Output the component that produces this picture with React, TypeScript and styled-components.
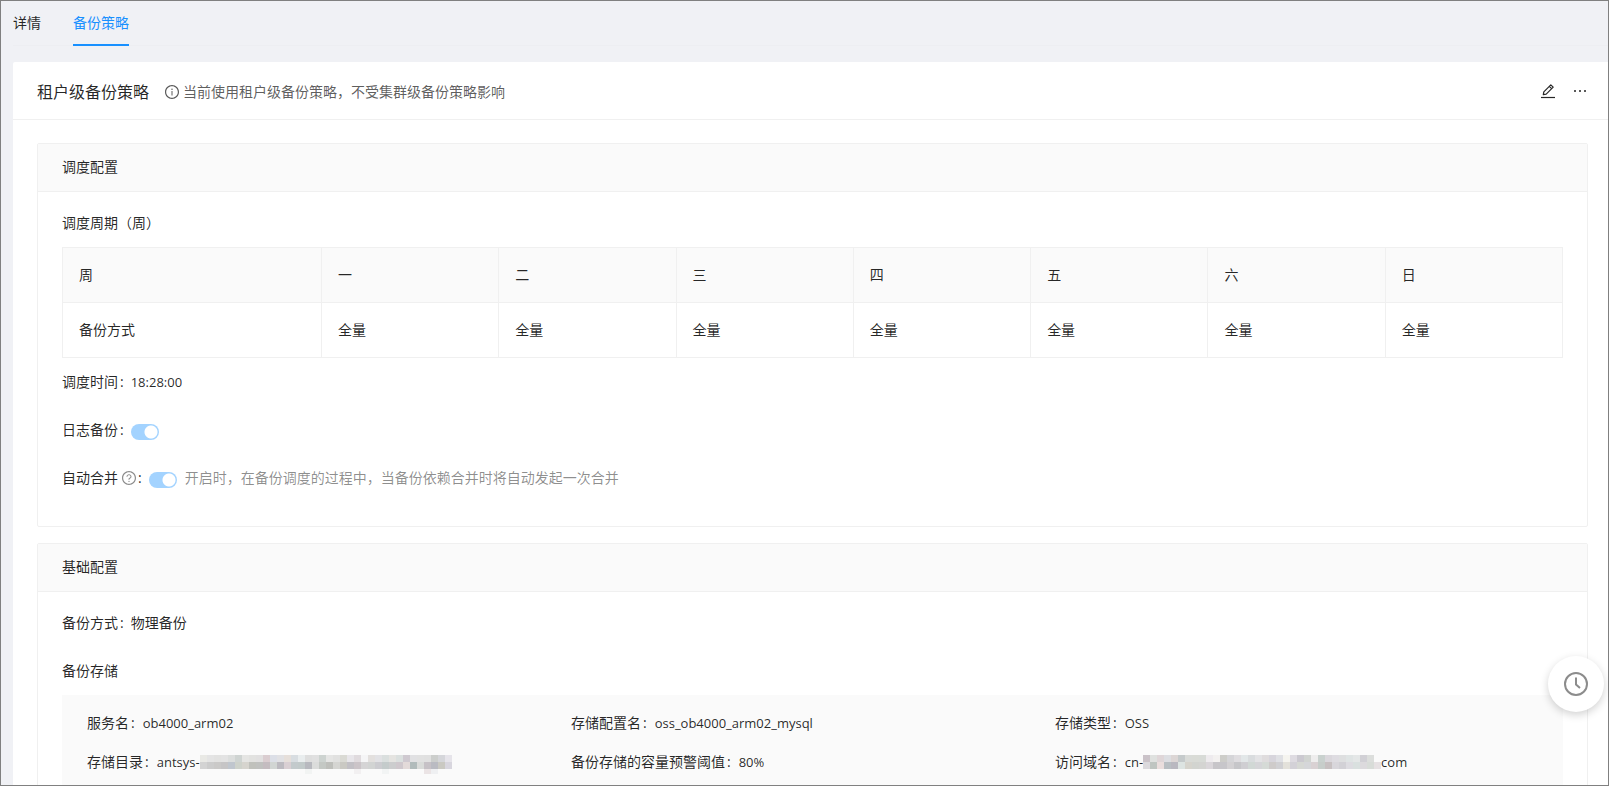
import React from "react";
import styled, { createGlobalStyle, css } from "styled-components";

const GlobalStyle = createGlobalStyle`
  * { box-sizing: border-box; }
  html, body, #root { height: 100%; }
  body {
    margin: 0;
    background: #f0f2f5;
    color: rgba(0, 0, 0, 0.85);
    font-family: "Open Sans", "Noto Sans CJK SC", sans-serif;
    font-size: 14px;
    line-height: 22px;
  }
`;

const Page = styled.div`
  height: 100%;
  overflow-y: auto;
  scrollbar-width: none;
  border: 1px solid #808080;
  padding-left: 12px;
  background: #f0f1f5;
`;

const Tabs = styled.nav`
  display: flex;
  gap: 32px;
  margin-bottom: 16px;
  padding-top: 11px;
  box-shadow: inset 0 -1px 0 #edeef2;
`;

const Tab = styled.a<{ $active?: boolean }>`
  height: 34px;
  color: inherit;
  text-decoration: none;
  border-bottom: 2px solid transparent;
  ${(p) => p.$active && css`
    color: #1890ff;
    border-bottom-color: #1890ff;
  `}
`;

const Panel = styled.main`
  background: #fff;
  border-radius: 2px 0 0 0;
`;

const PanelHeader = styled.header`
  display: flex;
  align-items: center;
  height: 58px;
  padding: 2px 20px 0 24px;
  border-bottom: 1px solid #f0f0f0;
`;

const Title = styled.h1`
  margin: 0 16px 0 0;
  font-size: 16px;
  line-height: 24px;
  font-weight: 400;
`;

const Notice = styled.p`
  display: flex;
  align-items: center;
  gap: 4px;
  margin: 0;
  flex: 1;
  color: rgba(0, 0, 0, 0.65);
`;

const Actions = styled.div`
  display: flex;
  gap: 16px;
  padding-bottom: 2px;
`;

const IconButton = styled.button`
  display: flex;
  padding: 0;
  border: 0;
  background: none;
  color: rgba(0, 0, 0, 0.85);
  cursor: pointer;
`;

const PanelBody = styled.div`
  display: flex;
  flex-direction: column;
  gap: 16px;
  padding: 23px 20px 24px 24px;
`;

const Card = styled.section`
  border: 1px solid #f0f0f0;
  border-radius: 2px;
`;

const CardTitle = styled.h2`
  margin: 0;
  padding: 12px 24px 13px;
  font-size: 14px;
  line-height: 22px;
  font-weight: 400;
  background: #fafafa;
  border-bottom: 1px solid #f0f0f0;
`;

const CardBody = styled.div`
  padding: 20px 24px 11px;
`;

const SubTitle = styled.h3`
  margin: 0 0 13px;
  font-size: 14px;
  line-height: 22px;
  font-weight: 400;
`;

const WeekTable = styled.table`
  width: 100%;
  table-layout: fixed;
  border-collapse: collapse;
  margin-bottom: 13px;

  th, td {
    height: 55px;
    padding: 0 16px;
    border: 1px solid #f0f0f0;
    font-weight: 400;
    text-align: left;
  }
  thead th { background: #fafafa; }
  th:first-child { width: 259px; }
`;

const Field = styled.div`
  display: flex;
  align-items: center;
  height: 22px;
  margin-bottom: 26px;
`;

const FieldLabel = styled.label`
  display: flex;
  align-items: center;
  &::after {
    content: ":";
    margin: 0 7px 0 2px;
  }
  svg { margin-left: 4px; }
`;

const Latin = styled.span`
  font-size: 13px;
`;

const Switch = styled.input`
  appearance: none;
  width: 28px;
  height: 16px;
  margin: 3px 8px 0 0;
  border-radius: 8px;
  background: radial-gradient(circle at 20px 8px, #fff 6px, #a3d3ff 7px);
`;

const Hint = styled.span`
  color: rgba(0, 0, 0, 0.45);
`;

const StorageBox = styled.dl`
  display: grid;
  grid-template-columns: repeat(3, 1fr);
  row-gap: 17px;
  margin: 0;
  padding: 17px 24px 17px 25px;
  background: #fafafa;
`;

const StorageItem = styled.div`
  display: flex;
  align-items: center;
  height: 22px;
`;

const Term = styled.dt`
  &::after {
    content: ":";
    margin: 0 8px 0 2px;
  }
`;

const Detail = styled.dd`
  display: flex;
  align-items: center;
  margin: 0;
  font-size: 13px;
`;

const MosaicSvg = styled.svg`
  display: block;
  overflow: visible;
`;

const FloatButton = styled.button`
  position: fixed;
  right: 5px;
  bottom: 74px;
  display: flex;
  align-items: center;
  justify-content: center;
  width: 56px;
  height: 56px;
  padding: 0;
  border: 0;
  border-radius: 50%;
  background: #fff;
  color: #8c8c8c;
  box-shadow: 0 3px 8px rgba(0, 0, 0, 0.18);
  cursor: pointer;
`;

const RING =
  "M512 64C264.600 64 64 264.600 64 512s200.600 448 448 448 448-200.600 448-448S759.400 64 512 64zm0 820c-205.400 0-372-166.600-372-372s166.600-372 372-372 372 166.600 372 372-166.600 372-372 372z";

const InfoIcon = () => (
  <svg width="14" height="14" viewBox="64 64 896 896" fill="currentColor" aria-hidden="true">
    <path d={RING} />
    <path d="M464 336a48 48 0 1 0 96 0 48 48 0 1 0-96 0zm72 112h-48c-4.400 0-8 3.600-8 8v272c0 4.400 3.600 8 8 8h48c4.400 0 8-3.600 8-8V456c0-4.400-3.600-8-8-8z" />
  </svg>
);

const QuestionIcon = () => (
  <svg width="14" height="14" viewBox="64 64 896 896" fill="#8c8c8c" aria-hidden="true">
    <path d={RING} />
    <path d="M623.600 316.700C593.600 290.400 554 276 512 276s-81.600 14.500-111.600 40.700C369.200 344 352 380.700 352 420v7.600c0 4.400 3.600 8 8 8h48c4.400 0 8-3.600 8-8V420c0-44.100 43.100-80 96-80s96 35.900 96 80c0 31.100-22 59.600-56.100 72.700-21.200 8.100-39.200 22.300-52.100 40.900-13.100 19-19.900 41.800-19.900 64.900V620c0 4.400 3.600 8 8 8h48c4.400 0 8-3.600 8-8v-22.700a48.300 48.300 0 0 1 30.900-44.800c59-22.700 97.100-74.700 97.100-132.500.1-39.300-17.100-76-48.300-103.300zM472 732a40 40 0 1 0 80 0 40 40 0 1 0-80 0z" />
  </svg>
);

const EditIcon = () => (
  <svg width="16" height="16" viewBox="0 0 16 16" fill="none" stroke="currentColor" aria-hidden="true">
    <path d="M3.300 11.700L3.800 8.800L10.800 1.800L13.200 4.200L6.200 11.200L3.300 11.700ZM9.300 3.400L11.600 5.700" strokeWidth="1.200" strokeLinejoin="round" />
    <path d="M1 14.500H15" strokeWidth="1.200" />
  </svg>
);

const MoreIcon = () => (
  <svg width="16" height="16" viewBox="0 0 16 16" fill="#595959" aria-hidden="true">
    <path d="M2 7h2v2H2zM7 7h2v2H7zM12 7h2v2h-2z" />
  </svg>
);

const ClockIcon = () => (
  <svg width="24" height="24" viewBox="0 0 24 24" fill="none" stroke="currentColor" strokeWidth="2" aria-hidden="true">
    <circle cx="12" cy="12" r="11" />
    <path d="M12 5.500V12.500L16 16" />
  </svg>
);

const CELL = 7;

/* Each row is a list of hex colours; "-" leaves a cell empty. */
const DIRECTORY_MASK = [
  "e9e9e5 e4e4e4 e2e2e1 e3e3e3 dcdedd cfd4d2 e5e5e3 e2e2e0 e1e0e0 dacdd0 dcdfe7 e1e1e4 e6dfda d8dde1 e9edee dedede e0e0e0 cdd3d0 e5e5e4 e1e1e0 dadad4 e8e6ea e0dbde f5f5f6 e3e0de e2e2e5 dadfde e5e4e1 dbe0df cfc9d0 e1e1e3 e1e1e1 e0e0e0 cccecc d5d6da e6e4ea",
  "d3d3d3 cccccc cac9c8 c6c5c6 c0c6ce ced2cb d6d4ce c0c1bc c0c1bf c4bcc0 d1d5d3 bcbac0 d9cfd3 c3cacc c2caca b8b9bf dbdcdb c4c8c4 bebfbb d5d5d2 cac9c3 c2c0c5 cbc4c8 d5d4d5 d2d4d3 ccccd0 c4cbcb cccdce cfc8cd e3dad9 b1bbbb d9dbd9 c6c1c6 babbc2 cac9c2 d8d6de",
  "- - - - - - - - - - - - - - - f2f4f3 - - - - - - f2f0f1 - - - f2f4f4 - - - - - ebe4e5 eff0f2",
];

const DOMAIN_MASK = [
  "cac2c8 dfe1df dfd6d8 dddee2 dcd6d5 c5cacb d9dbd8 d9dbd6 d8dbd7 eeebee f3f1f0 cdcdc9 d5d5d8 dfdde0 e2e7e8 d9dcde e3e3e5 dfdcdd d7d5dc dfe0e4 f5f4ef dedbe1 cbc9d0 d1d4d1 eeeded c9d1ce dad7dc dedce1 dedfe0 dfe4e4 e4e7e7 d1d0d5 dcdedc -",
  "dbd9dd bfc5c1 eadedd b9bfc3 b9b8c0 dde4e2 d6d4cd d2d4d0 d4d4d2 dad6da c7c5c9 c7c6ca d3d1d3 c6c6c9 cfced2 d1d8d5 d5d5d8 d5dad6 cecbca d0d0d3 e3e1da d3d1d7 d6d8d4 d5d6d9 d9d1d3 c7cdca c7c0c1 d8d6db d2d1d6 dddce1 d9e0df dcdadd d8dcd8 e6e1e3",
];

const Mosaic = ({ rows }: { rows: string[] }) => (
  <MosaicSvg width={rows[0].split(" ").length * CELL} height={CELL * 2} shapeRendering="crispEdges" aria-hidden="true">
    {rows.map((row, y) =>
      row.split(" ").map((c, x) =>
        c === "-" ? null : (
          <rect key={`${x}-${y}`} x={x * CELL} y={y * CELL} width={CELL} height={y === 2 ? 5 : CELL} fill={`#${c}`} />
        )
      )
    )}
  </MosaicSvg>
);

const DAYS = ["一", "二", "三", "四", "五", "六", "日"];

const STORAGE: { term: string; detail: React.ReactNode }[] = [
  { term: "服务名", detail: "ob4000_arm02" },
  { term: "存储配置名", detail: "oss_ob4000_arm02_mysql" },
  { term: "存储类型", detail: "OSS" },
  { term: "存储目录", detail: <>antsys-<Mosaic rows={DIRECTORY_MASK} /></> },
  { term: "备份存储的容量预警阈值", detail: "80%" },
  { term: "访问域名", detail: <>cn-<Mosaic rows={DOMAIN_MASK} />com</> },
];

export default function App() {
  return (
    <>
      <GlobalStyle />
      <Page>
        <Tabs>
          <Tab href="#detail">详情</Tab>
          <Tab href="#backup" $active aria-current="page">备份策略</Tab>
        </Tabs>
        <Panel>
          <PanelHeader>
            <Title>租户级备份策略</Title>
            <Notice><InfoIcon />当前使用租户级备份策略，不受集群级备份策略影响</Notice>
            <Actions>
              <IconButton aria-label="编辑"><EditIcon /></IconButton>
              <IconButton aria-label="更多"><MoreIcon /></IconButton>
            </Actions>
          </PanelHeader>
          <PanelBody>
            <Card>
              <CardTitle>调度配置</CardTitle>
              <CardBody>
                <SubTitle>调度周期（周）</SubTitle>
                <WeekTable>
                  <thead>
                    <tr><th scope="col">周</th>{DAYS.map((d) => <th scope="col" key={d}>{d}</th>)}</tr>
                  </thead>
                  <tbody>
                    <tr><th scope="row">备份方式</th>{DAYS.map((d) => <td key={d}>全量</td>)}</tr>
                  </tbody>
                </WeekTable>
                <Field><FieldLabel as="span">调度时间</FieldLabel><Latin>18:28:00</Latin></Field>
                <Field>
                  <FieldLabel htmlFor="log-backup">日志备份</FieldLabel>
                  <Switch id="log-backup" type="checkbox" role="switch" defaultChecked disabled />
                </Field>
                <Field>
                  <FieldLabel htmlFor="auto-merge">自动合并<QuestionIcon /></FieldLabel>
                  <Switch id="auto-merge" type="checkbox" role="switch" defaultChecked disabled />
                  <Hint>开启时，在备份调度的过程中，当备份依赖合并时将自动发起一次合并</Hint>
                </Field>
              </CardBody>
            </Card>
            <Card>
              <CardTitle>基础配置</CardTitle>
              <CardBody>
                <Field><FieldLabel as="span">备份方式</FieldLabel>物理备份</Field>
                <SubTitle>备份存储</SubTitle>
                <StorageBox>
                  {STORAGE.map(({ term, detail }) => (
                    <StorageItem key={term}><Term>{term}</Term><Detail>{detail}</Detail></StorageItem>
                  ))}
                </StorageBox>
              </CardBody>
            </Card>
          </PanelBody>
        </Panel>
        <FloatButton aria-label="历史记录"><ClockIcon /></FloatButton>
      </Page>
    </>
  );
}
